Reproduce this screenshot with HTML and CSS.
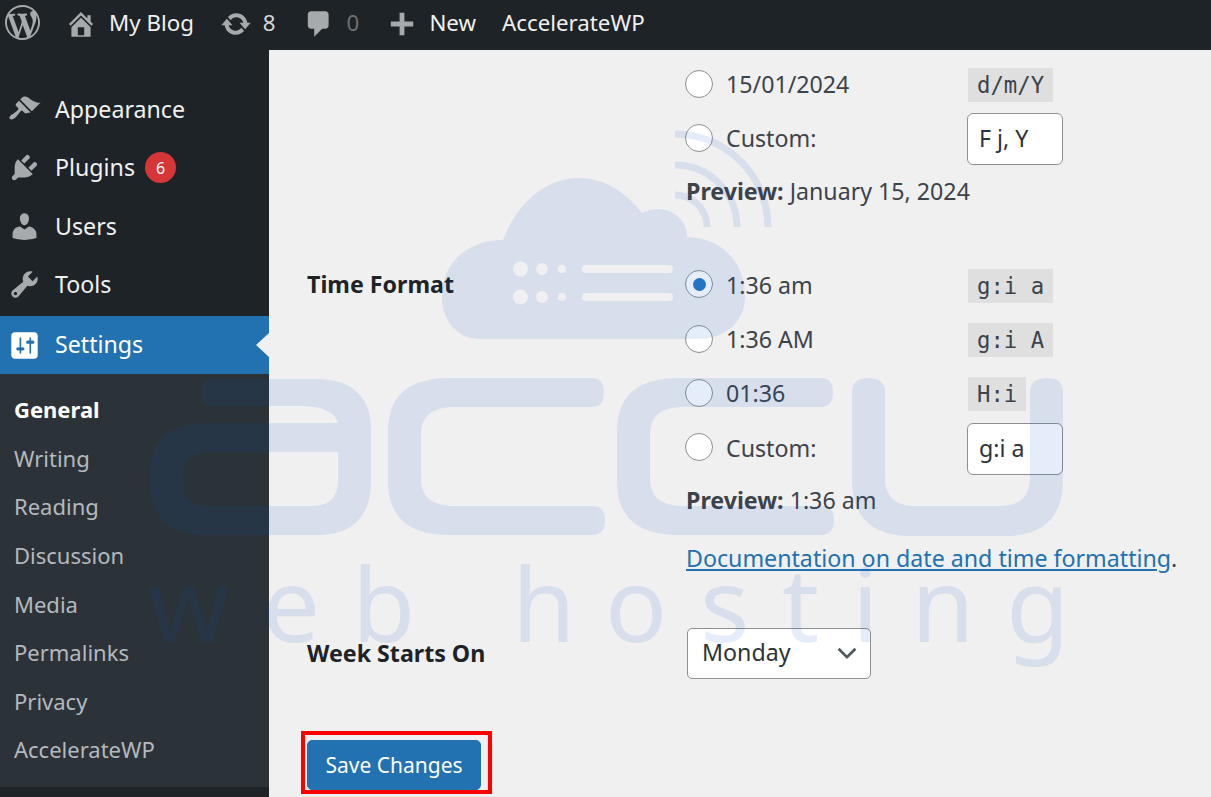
FILE: index.html
```html
<!DOCTYPE html>
<html lang="en">
<head>
<meta charset="utf-8">
<title>General Settings</title>
<link rel="stylesheet" href="styles.css">
</head>
<body>
<header class="adminbar">
  <svg class="ab-logo" viewBox="0 0 20 20"><path d="M20 10c0-5.51-4.49-10-10-10C4.48 0 0 4.49 0 10c0 5.52 4.48 10 10 10 5.51 0 10-4.48 10-10zM7.78 15.37L4.37 6.22c.55-.02 1.17-.08 1.17-.08.5-.06.44-1.13-.06-1.11 0 0-1.45.11-2.37.11-.18 0-.37 0-.58-.01C4.12 2.69 6.87 1.11 10 1.11c2.33 0 4.45.87 6.05 2.34-.68-.11-1.65.39-1.65 1.58 0 .74.45 1.36.9 2.1.35.61.55 1.36.55 2.46 0 1.49-1.4 5-1.4 5l-3.03-8.37c.54-.02.82-.17.82-.17.5-.05.44-1.25-.06-1.22 0 0-1.44.12-2.38.12-.87 0-2.33-.12-2.33-.12-.5-.03-.56 1.2-.06 1.22l.92.08 1.26 3.41zM17.41 10c.24-.64.74-1.87.43-4.25.7 1.29 1.05 2.71 1.05 4.25 0 3.29-1.73 6.24-4.4 7.78.97-2.59 1.94-5.2 2.92-7.78zM6.1 18.09C3.12 16.65 1.11 13.53 1.11 10c0-1.3.23-2.48.72-3.59C3.25 10.3 4.67 14.2 6.1 18.09zm4.03-6.63l2.58 6.98c-.86.29-1.76.45-2.71.45-.79 0-1.57-.11-2.29-.33.81-2.38 1.62-4.74 2.42-7.1z"/></svg>
  <svg class="ab-icon ab-home" viewBox="0 0 20 20"><path d="M16 8.5l1.53 1.53-1.06 1.06L10 4.62l-6.47 6.47-1.06-1.06L10 2.5l4 4v-2h2v4zm-6-2.46l6 5.99V18H4v-5.97zM12 17v-5H8v5h4z"/></svg>
  <span class="ab-text ab-blog">My Blog</span>
  <svg class="ab-icon ab-update" viewBox="0 0 20 20"><path d="M10.2 3.28c3.53 0 6.43 2.61 6.92 6h2.08l-3.5 4-3.5-4h2.32c-.45-1.97-2.21-3.45-4.32-3.45-1.45 0-2.73.71-3.54 1.78L4.95 5.66C6.23 4.2 8.11 3.28 10.2 3.28zm-.4 13.44c-3.52 0-6.43-2.61-6.92-6H.8l3.5-4c1.17 1.33 2.33 2.67 3.5 4H5.48c.45 1.97 2.21 3.45 4.32 3.45 1.45 0 2.73-.71 3.54-1.78l1.71 1.95c-1.28 1.46-3.15 2.38-5.25 2.38z"/></svg>
  <span class="ab-text ab-count">8</span>
  <svg class="ab-icon ab-comment" viewBox="0 0 20 20"><path d="M5 2h9c1.1 0 2 .9 2 2v7c0 1.1-.9 2-2 2h-2l-5 5v-5H5c-1.1 0-2-.9-2-2V4c0-1.1.9-2 2-2z"/></svg>
  <span class="ab-text ab-zero">0</span>
  <svg class="ab-icon ab-plus" viewBox="0 0 20 20"><path d="M17 8.5v3h-5.5V17h-3v-5.5H3v-3h5.5V3h3v5.5z"/></svg>
  <span class="ab-text ab-new">New</span>
  <span class="ab-text ab-wp">AccelerateWP</span>
</header>

<div class="shell">
  <nav class="sidebar">
    <ul class="menu">
      <li class="menu-item"><svg class="menu-icon" viewBox="0 0 20 20"><path d="M14.48 11.06L7.41 3.99l1.5-1.5c.5-.56 2.3-.47 3.51.32 1.21.8 1.43 1.28 2.91 2.1 1.18.64 2.45 1.26 4.45.85zm-.71.71L6.7 4.7 4.93 6.47c-.39.39-.39 1.02 0 1.41l1.06 1.06c.39.39.39 1.03 0 1.42-.6.6-1.43 1.11-2.21 1.69-.35.26-.7.53-1.01.84C1.43 13.23.4 14.97 1.2 15.8c.8.8 2.57-.23 3.91-1.57.31-.31.58-.66.85-1.01.57-.78 1.08-1.61 1.69-2.21.39-.39 1.02-.39 1.41 0l1.06 1.06c.39.39 1.02.39 1.41 0z"/></svg><span class="menu-text">Appearance</span></li>
      <li class="menu-item"><svg class="menu-icon" viewBox="0 0 20 20"><path d="M13.11 4.36L9.87 7.6 8 5.73l3.24-3.24c.35-.34 1.05-.2 1.56.32.52.51.66 1.21.31 1.55zm-8 1.77l.91-1.12 9.01 9.01-1.19.84c-.71.71-2.63 1.16-3.82 1.16H6.14L4.9 17.26c-.59.59-1.54.59-2.12 0-.59-.58-.59-1.53 0-2.12l1.24-1.24v-3.88c0-1.13.4-3.19 1.09-3.89zm7.26 3.97l3.24-3.24c.34-.35 1.04-.21 1.55.31.52.51.66 1.21.31 1.55l-3.24 3.25z"/></svg><span class="menu-text">Plugins</span><span class="badge">6</span></li>
      <li class="menu-item"><svg class="menu-icon" viewBox="0 0 20 20"><path d="M10 9.25c-2.27 0-2.73-3.44-2.73-3.44C7 4.02 7.82 2 9.97 2c2.16 0 2.98 2.02 2.71 3.81 0 0-.41 3.44-2.68 3.44zm0 2.57L12.72 10c2.39 0 4.52 2.33 4.52 4.53v2.49s-3.65 1.13-7.24 1.13c-3.65 0-7.24-1.13-7.24-1.13v-2.49c0-2.25 1.94-4.48 4.47-4.48z"/></svg><span class="menu-text">Users</span></li>
      <li class="menu-item"><svg class="menu-icon" viewBox="0 0 20 20"><path d="M16.68 9.77c-1.34 1.34-3.3 1.67-4.95.99l-5.41 6.52c-.99.99-2.59.99-3.58 0s-.99-2.59 0-3.57l6.52-5.42c-.68-1.65-.35-3.61.99-4.95 1.28-1.28 3.12-1.62 4.72-1.06l-2.89 2.89 2.82 2.82 2.86-2.87c.53 1.58.18 3.39-1.08 4.65zM3.81 16.21c.4.39 1.04.39 1.43 0 .4-.4.4-1.04 0-1.43-.39-.4-1.03-.4-1.43 0-.39.39-.39 1.03 0 1.43z"/></svg><span class="menu-text">Tools</span></li>
      <li class="menu-item current"><svg class="menu-icon" viewBox="0 0 20 20"><path d="M18 16V4c0-1.1-.9-2-2-2H4c-1.1 0-2 .9-2 2v12c0 1.1.9 2 2 2h12c1.1 0 2-.9 2-2zM8 11h1c.55 0 1 .45 1 1s-.45 1-1 1H8v1.5c0 .28-.22.5-.5.5s-.5-.22-.5-.5V13H6c-.55 0-1-.45-1-1s.45-1 1-1h1V5.5c0-.28.22-.5.5-.5s.5.22.5.5V11zm5-2h-1c-.55 0-1-.45-1-1s.45-1 1-1h1V5.5c0-.28.22-.5.5-.5s.5.22.5.5V7h1c.55 0 1 .45 1 1s-.45 1-1 1h-1v5.5c0 .28-.22.5-.5.5s-.5-.22-.5-.5V9z"/></svg><span class="menu-text">Settings</span></li>
    </ul>
    <ul class="submenu">
      <li class="sub-item active">General</li>
      <li class="sub-item">Writing</li>
      <li class="sub-item">Reading</li>
      <li class="sub-item">Discussion</li>
      <li class="sub-item">Media</li>
      <li class="sub-item">Permalinks</li>
      <li class="sub-item">Privacy</li>
      <li class="sub-item">AccelerateWP</li>
    </ul>
  </nav>

  <main class="content">
    <section class="row row-date">
      <div class="row-label"></div>
      <div class="row-field">
        <div class="option"><input class="radio" type="radio" name="date"><span class="opt-text">15/01/2024</span><code class="fmt">d/m/Y</code></div>
        <div class="option"><input class="radio" type="radio" name="date"><span class="opt-text">Custom:</span><input class="custom" type="text" value="F j, Y"></div>
        <p class="preview"><b>Preview:</b> January 15, 2024</p>
      </div>
    </section>
    <section class="row row-time">
      <div class="row-label">Time Format</div>
      <div class="row-field">
        <div class="option"><input class="radio" type="radio" name="time" checked><span class="opt-text">1:36 am</span><code class="fmt">g:i a</code></div>
        <div class="option"><input class="radio" type="radio" name="time"><span class="opt-text">1:36 AM</span><code class="fmt">g:i A</code></div>
        <div class="option"><input class="radio" type="radio" name="time"><span class="opt-text">01:36</span><code class="fmt">H:i</code></div>
        <div class="option"><input class="radio" type="radio" name="time"><span class="opt-text">Custom:</span><input class="custom" type="text" value="g:i a"></div>
        <p class="preview"><b>Preview:</b> 1:36 am</p>
        <p class="doc"><a href="#">Documentation on date and time formatting</a>.</p>
      </div>
    </section>
    <section class="row row-week">
      <div class="row-label">Week Starts On</div>
      <div class="row-field">
        <div class="select"><span class="select-text">Monday</span><svg class="chevron" viewBox="0 0 20 20"><path d="M3 6.5l7 7 7-7"/></svg></div>
      </div>
    </section>
    <div class="save-mark"><button class="save" type="button">Save Changes</button></div>
  </main>
</div>

<svg class="watermark" viewBox="0 0 1211 797" aria-hidden="true">
  <path fill-rule="evenodd" d="M480 339C455 339 442 318 442 297C442 262 468 240 503 240C516 205 545 178 578 178C606 178 626 193 642 213C648 210 652 209 658 209C674 209 688 222 687 237C722 238 745 262 745 297C745 322 725 339 698 339ZM513 269a7.5 7.5 0 1 0 15 0a7.5 7.5 0 1 0-15 0zM536 269a6 6 0 1 0 12 0a6 6 0 1 0-12 0zM558 269a4 4 0 1 0 8 0a4 4 0 1 0-8 0zM513 297a7.5 7.5 0 1 0 15 0a7.5 7.5 0 1 0-15 0zM536 297a6 6 0 1 0 12 0a6 6 0 1 0-12 0zM558 297a4 4 0 1 0 8 0a4 4 0 1 0-8 0zM586 265H669a4 4 0 0 1 0 8H586a4 4 0 0 1 0-8zM586 293H669a4 4 0 0 1 0 8H586a4 4 0 0 1 0-8z"/>
  <path class="wave" d="M675 195A32 32 0 0 1 707 227M675 165A62 62 0 0 1 737 227M675 134A93 93 0 0 1 768 227"/>
  <path fill-rule="evenodd" d="M213 379H318C352 379 371 398 371 428V480C371 517 352 535 318 535H208C170 535 150 517 150 482V474C150 440 170 423 208 423H338C335 412 322 406 300 406H213Q201 406 201 392Q201 379 213 379ZM338 452H210C192 452 183 460 183 476V482C183 498 192 506 210 506H312C330 506 338 497 338 480Z"/>
  <path d="M592 378H450C408 378 388 396 388 432V481C388 517 408 535 450 535H592Q605 535 605 520Q605 506 592 506H455C432 506 421 497 421 478V435C421 416 432 407 455 407H592Q604 407 604 392Q604 378 592 378Z"/>
  <path d="M821 378H679C637 378 617 396 617 432V481C617 517 637 535 679 535H821Q834 535 834 520Q834 506 821 506H684C661 506 650 497 650 478V435C650 416 661 407 684 407H821Q833 407 833 392Q833 378 821 378Z"/>
  <path d="M868 378Q852 378 852 392V480C852 517 872 536 910 536H1005C1043 536 1063 517 1063 480V392Q1063 378 1047 378Q1030 378 1030 392V478C1030 497 1019 506 1000 506H915C896 506 885 497 885 478V392Q885 378 868 378Z"/>
  <text class="wm-text" x="148 262 352 512 605 700 782 852 911 1006" y="642">webhosting</text>
</svg>
</body>
</html>
```
FILE: styles.css
```css
* { box-sizing: border-box; }
html, body { margin: 0; height: 797px; overflow: hidden; }
body {
  position: relative;
  font-family: "Noto Sans", "Open Sans", sans-serif;
  font-size: 23.2px;
  background: #f0f0f0;
  color: #3c434a;
  display: flex;
  flex-direction: column;
}
ul { list-style: none; margin: 0; padding: 0; }
p { margin: 0; }

.adminbar {
  flex: 0 0 50px;
  height: 50px;
  background: #1d2327;
  display: flex;
  align-items: center;
  color: #f0f0f0;
  font-size: 22.3px;
}
.adminbar svg { fill: #a7aaad; flex: none; }
.ab-logo { width: 35px; height: 35px; margin: 0 0 5px 5px; }
.ab-icon { width: 32px; height: 32px; margin-bottom: 3px; }
.ab-home { margin-left: 25px; }
.ab-text { white-space: nowrap; margin-bottom: 5px; }
.ab-blog { margin-left: 12px; }
.ab-update { margin-left: 26px; }
.ab-count { margin-left: 11px; color: #d5d7d9; }
.ab-comment { margin-left: 27px; }
.ab-zero { margin-left: 12px; color: #6d7277; }
.ab-plus { margin-left: 27px; }
.ab-new { margin-left: 11px; }
.ab-wp { margin-left: 26px; }

.shell { flex: 1; display: flex; min-height: 0; }
.sidebar { flex: 0 0 269px; background: #1d2327; }
.menu { padding-top: 30px; }
.menu-item {
  height: 58.5px;
  display: flex;
  align-items: center;
  padding-left: 8px;
  color: #f0f0f0;
}
.menu-icon { width: 33px; height: 33px; fill: #a7aaad; margin-right: 14px; flex: none; }
.menu-text { margin-bottom: 1px; }
.menu-item.current {
  position: relative;
  height: 58px;
  margin-top: 2px;
  background: #2271b1;
  color: #fff;
}
.menu-item.current .menu-text { margin-bottom: 3px; }
.menu-item.current .menu-icon { fill: #fff; }
.menu-item.current::after {
  content: "";
  position: absolute;
  right: 0;
  top: 50%;
  margin-top: -12px;
  border: 12px solid transparent;
  border-left: 0;
  border-right: 13px solid #f0f0f0;
}
.badge {
  width: 31px;
  height: 31px;
  border-radius: 50%;
  background: #d63638;
  color: #fff;
  font-size: 16px;
  display: flex;
  align-items: center;
  justify-content: center;
  margin-left: 10px;
}
.submenu { background: #2c3338; padding: 12px 0; font-size: 22px; }
.sub-item {
  height: 48.6px;
  display: flex;
  align-items: center;
  padding: 0 0 2px 14px;
  color: #b4b9be;
}
.sub-item.active { color: #fff; font-weight: 700; }

.content { flex: 1; padding: 8px 0 0 38px; min-width: 0; }
.row { display: grid; grid-template-columns: 379px 1fr; }
.row-time { margin-top: 39px; }
.row-week { margin-top: 42px; align-items: center; }
.row-label { font-weight: 700; color: #1d2327; }
.row-time .row-label { line-height: 50px; }
.option { height: 54.3px; display: flex; align-items: center; }
.radio {
  appearance: none;
  width: 28px;
  height: 28px;
  margin: 0 13px 3px -1px;
  border: 1px solid #8c8f94;
  border-radius: 50%;
  background: #fff;
  flex: none;
  display: flex;
  align-items: center;
  justify-content: center;
}
.radio:checked::before {
  content: "";
  width: 13px;
  height: 13px;
  border-radius: 50%;
  background: #2878c4;
}
.opt-text { width: 242px; flex: none; white-space: nowrap; margin-bottom: 2px; }
.fmt {
  font-family: "DejaVu Sans Mono", "Liberation Mono", monospace;
  font-size: 22.3px;
  line-height: 34px;
  padding: 0 9px;
  background: rgba(0, 0, 0, 0.07);
  white-space: nowrap;
}
.custom {
  width: 96px;
  height: 52px;
  margin-left: -1px;
  padding: 0 11px 2px;
  font: inherit;
  color: #2c3338;
  background: #fff;
  border: 1px solid #8c8f94;
  border-radius: 6px;
}
.preview { height: 53px; line-height: 49px; white-space: nowrap; }
.preview b { color: #3c434a; }
.doc { margin-top: 4px; height: 53px; line-height: 51px; white-space: nowrap; }
.doc a { color: #2271b1; }
.select {
  width: 184px;
  height: 51px;
  margin-left: 1px;
  padding: 0 14px;
  display: flex;
  align-items: center;
  justify-content: space-between;
  color: #2c3338;
  background: #fff;
  border: 1px solid #8c8f94;
  border-radius: 5px;
}
.select-text { margin-bottom: 3px; }
.chevron { width: 24px; height: 24px; fill: none; stroke: #50575e; stroke-width: 2.2; margin-right: -3px; }
.save-mark {
  display: inline-flex;
  margin: 52px 0 0 -6px;
  padding: 5px 7px 0 2px;
  border: 4px solid #f00;
}
.save {
  width: 174px;
  height: 50px;
  padding: 0;
  font: inherit;
  font-size: 21px;
  color: #fff;
  background: #2271b1;
  border: 1px solid #2271b1;
  border-radius: 5px;
}
.watermark {
  position: absolute;
  left: 0;
  top: 0;
  width: 1211px;
  height: 797px;
  pointer-events: none;
  fill: rgb(0, 85, 200);
  fill-opacity: 0.105;
}
.wave { fill: none; stroke: rgb(0, 85, 200); stroke-opacity: 0.105; stroke-width: 7; }
.wm-text { font-family: "Noto Sans", sans-serif; font-size: 103px; }
```
